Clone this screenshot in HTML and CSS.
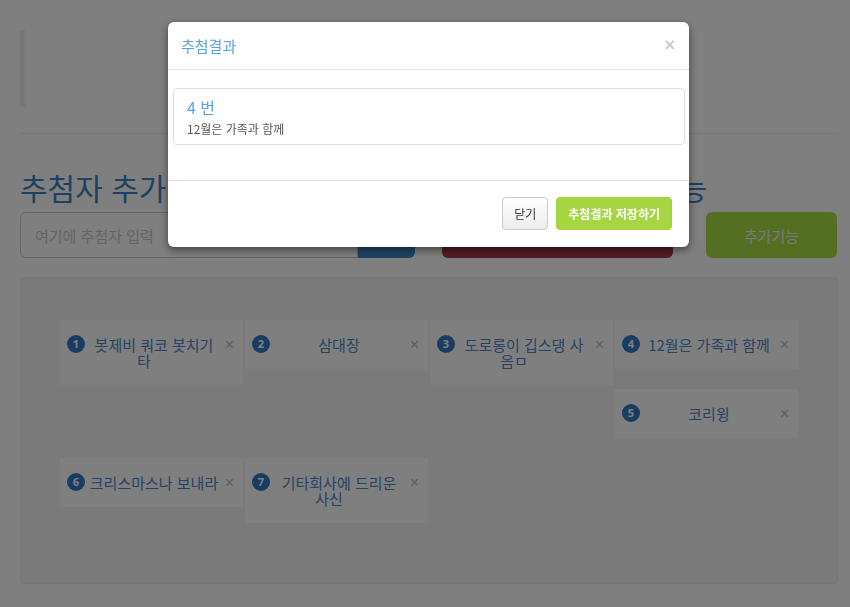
FILE: index.html
```html
<!DOCTYPE html>
<html lang="ko">
<head>
<meta charset="utf-8">
<title>추첨</title>
<link rel="stylesheet" href="styles.css">
</head>
<body>
<div class="page">
  <blockquote class="intro"></blockquote>
  <hr class="divider">
  <div class="controls">
    <div class="col-left">
      <h2 class="section-title">추첨자 추가</h2>
      <div class="input-group">
        <input class="name-input" type="text" placeholder="여기에 추첨자 입력">
        <button class="btn-add">추가</button>
      </div>
    </div>
    <div class="col-right">
      <h2 class="section-title">추첨하기 및 추가기능</h2>
      <div class="action-row">
        <button class="btn-draw">추첨하기</button>
        <button class="btn-extra">추가기능</button>
      </div>
    </div>
  </div>
  <div class="well">
    <div class="entry"><p class="entry-name"><span class="num">1</span>봇제비 쿼코 봇치기<br>타</p><span class="entry-remove">×</span></div>
    <div class="entry"><p class="entry-name"><span class="num">2</span>삼대장</p><span class="entry-remove">×</span></div>
    <div class="entry"><p class="entry-name"><span class="num">3</span>도로롱이 깁스댕 사<br>옴ㅁ</p><span class="entry-remove">×</span></div>
    <div class="entry"><p class="entry-name"><span class="num">4</span>12월은 가족과 함께</p><span class="entry-remove">×</span></div>
    <div class="entry"><p class="entry-name"><span class="num">5</span>코리윙</p><span class="entry-remove">×</span></div>
    <div class="entry"><p class="entry-name"><span class="num">6</span>크리스마스나 보내라</p><span class="entry-remove">×</span></div>
    <div class="entry"><p class="entry-name"><span class="num">7</span>기타회사에 드리운<br>사신</p><span class="entry-remove">×</span></div>
  </div>
</div>

<div class="backdrop"></div>

<div class="modal">
  <div class="modal-header">
    <h4 class="modal-title">추첨결과</h4>
    <span class="modal-close">×</span>
  </div>
  <div class="modal-body">
    <div class="result-item">
      <h4 class="result-num">4 번</h4>
      <p class="result-name">12월은 가족과 함께</p>
    </div>
  </div>
  <div class="modal-footer">
    <button class="btn-close">닫기</button>
    <button class="btn-save">추첨결과 저장하기</button>
  </div>
</div>
</body>
</html>
```

FILE: styles.css
```css
* { box-sizing: border-box; }

html, body { margin: 0; }

body {
  width: 850px;
  height: 607px;
  overflow: hidden;
  background: #fff;
  color: #333;
  font-family: "Noto Sans CJK KR", "Noto Sans", sans-serif;
}

.page {
  padding: 30px 12px 0 20px;
}

.intro {
  margin: 0;
  height: 77px;
  border-left: 5px solid #eee;
}

.divider {
  margin: 26px 0 0;
  border: 0;
  border-top: 1px solid #eee;
}

.controls {
  display: flex;
  gap: 27px;
  margin-top: 37px;
}

.col-left { width: 395px; }
.col-right { flex: 1; }

.section-title {
  margin: 0 0 8px;
  font-size: 30px;
  line-height: 33px;
  font-weight: 400;
  color: #3b82c8;
  white-space: nowrap;
}

.input-group {
  display: flex;
  height: 46px;
}

.name-input {
  width: 338px;
  height: 46px;
  margin: 0;
  padding: 0 14px;
  border: 1px solid #ccc;
  border-radius: 6px 0 0 6px;
  font-family: inherit;
  font-size: 15px;
  color: #555;
}

.name-input::placeholder { color: #c8c8c8; }

.btn-add {
  flex: 1;
  margin: 0;
  border: 0;
  border-radius: 0 6px 6px 0;
  background: #3d8ad2;
  color: #fff;
  font-family: inherit;
  font-size: 15px;
}

.action-row {
  display: flex;
  gap: 33px;
  height: 46px;
}

.btn-draw,
.btn-extra {
  margin: 0;
  border: 0;
  border-radius: 6px;
  color: #fff;
  font-family: inherit;
  font-size: 15px;
}

.btn-draw {
  width: 231px;
  background: #a83c46;
}

.btn-extra {
  width: 131px;
  background: #a8dc44;
  color: #f4f4f4;
}

.well {
  display: flow-root;
  margin-top: 19px;
  padding: 42px 19px 40px 39px;
  background: #f5f5f5;
  border: 1px solid #ececec;
  border-radius: 4px;
}

.entry {
  position: relative;
  float: left;
  width: 183px;
  margin: 0 2px 20px 0;
  padding: 17px 22px 16px 7px;
  background: #fff;
}

.entry-name {
  margin: 0;
  font-size: 15px;
  line-height: 16px;
  text-align: center;
  color: #4d86cc;
}

.num {
  float: left;
  width: 18px;
  height: 18px;
  margin: -2px 2px 0 0;
  border-radius: 50%;
  background: #3278c4;
  color: #fff;
  font-family: "Noto Sans", sans-serif;
  font-size: 11px;
  font-weight: 700;
  line-height: 18px;
  text-align: center;
}

.entry-remove {
  position: absolute;
  top: 17px;
  right: 9px;
  font-family: "Liberation Sans", sans-serif;
  font-size: 16px;
  line-height: 16px;
  color: #bdbdbd;
}

.backdrop {
  position: fixed;
  inset: 0;
  background: rgba(0, 0, 0, 0.5);
}

.modal {
  position: fixed;
  top: 22px;
  left: 168px;
  width: 521px;
  background: #fff;
  border-radius: 6px;
  box-shadow: 0 3px 9px rgba(0, 0, 0, 0.5);
}

.modal-header {
  display: flex;
  align-items: center;
  justify-content: space-between;
  height: 48px;
  padding: 0 14px 0 13px;
  border-bottom: 1px solid #e5e5e5;
}

.modal-title {
  margin: 0;
  font-size: 15px;
  line-height: 17px;
  font-weight: 400;
  color: #5ba2dc;
}

.modal-close {
  font-family: "Liberation Sans", sans-serif;
  font-size: 18px;
  font-weight: 700;
  line-height: 17px;
  color: #ccc;
}

.modal-body {
  padding: 18px 4px 35px 5px;
}

.result-item {
  height: 57px;
  padding: 8px 13px 7px;
  border: 1px solid #ddd;
  border-radius: 4px;
}

.result-num {
  margin: 0 0 3px;
  font-size: 16px;
  line-height: 20px;
  font-weight: 400;
  color: #5ba2dc;
}

.result-name {
  margin: 0;
  font-size: 12px;
  line-height: 17px;
  color: #555;
}

.modal-footer {
  display: flex;
  justify-content: flex-end;
  gap: 8px;
  padding: 16px 17px 17px;
  border-top: 1px solid #e5e5e5;
}

.btn-close,
.btn-save {
  height: 33px;
  margin: 0;
  padding: 7px 11px;
  border-radius: 4px;
  font-family: inherit;
  font-size: 12px;
  line-height: 17px;
}

.btn-close {
  border: 1px solid #ccc;
  background: linear-gradient(#fff, #ececec);
  color: #333;
}

.btn-save {
  border: 1px solid #a2d43c;
  background: #a6d641;
  color: #fff;
  font-weight: 700;
}
```
